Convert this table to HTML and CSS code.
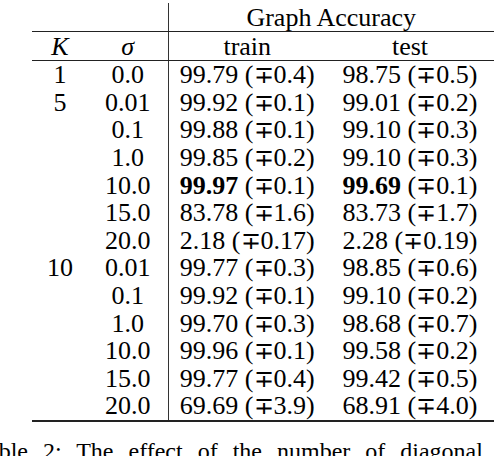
FILE: index.html
```html
<!DOCTYPE html>
<html lang="en">

<head>
    <meta charset="UTF-8">
    <title>Graph Accuracy</title>
    <link rel="stylesheet" href="styles.css">
</head>

<body>
    <table class="resultados">
        <colgroup>
            <col class="colK">
            <col class="colSigma">
            <col class="colTrain">
            <col class="colTest">
        </colgroup>
        <tr class="topo">
            <td></td>
            <td></td>
            <td class="divisa" colspan="2">Graph Accuracy</td>
        </tr>
        <tr class="cabecalho">
            <td><i>K</i></td>
            <td><i>σ</i></td>
            <td class="divisa">train</td>
            <td>test</td>
        </tr>
        <tr>
            <td>1</td><td>0.0</td>
            <td class="divisa">99.79 (<span class="mp">∓</span>0.4)</td><td>98.75 (<span class="mp">∓</span>0.5)</td>
        </tr>
        <tr>
            <td>5</td><td>0.01</td>
            <td class="divisa">99.92 (<span class="mp">∓</span>0.1)</td><td>99.01 (<span class="mp">∓</span>0.2)</td>
        </tr>
        <tr>
            <td></td><td>0.1</td>
            <td class="divisa">99.88 (<span class="mp">∓</span>0.1)</td><td>99.10 (<span class="mp">∓</span>0.3)</td>
        </tr>
        <tr>
            <td></td><td>1.0</td>
            <td class="divisa">99.85 (<span class="mp">∓</span>0.2)</td><td>99.10 (<span class="mp">∓</span>0.3)</td>
        </tr>
        <tr>
            <td></td><td>10.0</td>
            <td class="divisa"><b>99.97</b> (<span class="mp">∓</span>0.1)</td><td><b>99.69</b> (<span class="mp">∓</span>0.1)</td>
        </tr>
        <tr>
            <td></td><td>15.0</td>
            <td class="divisa">83.78 (<span class="mp">∓</span>1.6)</td><td>83.73 (<span class="mp">∓</span>1.7)</td>
        </tr>
        <tr>
            <td></td><td>20.0</td>
            <td class="divisa">2.18 (<span class="mp">∓</span>0.17)</td><td>2.28 (<span class="mp">∓</span>0.19)</td>
        </tr>
        <tr>
            <td>10</td><td>0.01</td>
            <td class="divisa">99.77 (<span class="mp">∓</span>0.3)</td><td>98.85 (<span class="mp">∓</span>0.6)</td>
        </tr>
        <tr>
            <td></td><td>0.1</td>
            <td class="divisa">99.92 (<span class="mp">∓</span>0.1)</td><td>99.10 (<span class="mp">∓</span>0.2)</td>
        </tr>
        <tr>
            <td></td><td>1.0</td>
            <td class="divisa">99.70 (<span class="mp">∓</span>0.3)</td><td>98.68 (<span class="mp">∓</span>0.7)</td>
        </tr>
        <tr>
            <td></td><td>10.0</td>
            <td class="divisa">99.96 (<span class="mp">∓</span>0.1)</td><td>99.58 (<span class="mp">∓</span>0.2)</td>
        </tr>
        <tr>
            <td></td><td>15.0</td>
            <td class="divisa">99.77 (<span class="mp">∓</span>0.4)</td><td>99.42 (<span class="mp">∓</span>0.5)</td>
        </tr>
        <tr class="ultima">
            <td></td><td>20.0</td>
            <td class="divisa">69.69 (<span class="mp">∓</span>3.9)</td><td>68.91 (<span class="mp">∓</span>4.0)</td>
        </tr>
    </table>

    <p class="legenda">Table 2: The effect of the number of diagonal blocks</p>
</body>

</html>
```

FILE: styles.css
```css
body {
    margin: 0;
    overflow: hidden;
    font-family: "Liberation Serif", "DejaVu Serif", serif;
    color: #000;
}

.resultados {
    border-collapse: collapse;
    margin-top: 3px;
    margin-left: 32px;
    width: 462px;
    font-size: 26px;
    table-layout: fixed;
}

.colK {
    width: 56px;
}

.colSigma {
    width: 80px;
}

.colTrain {
    width: 158px;
}

.colTest {
    width: 168px;
}

.resultados td {
    padding: 0;
    text-align: center;
    height: 27.6px;
    line-height: 27px;
    white-space: nowrap;
}

.mp {
    font-family: "DejaVu Sans", sans-serif;
    font-weight: 200;
    font-size: 0.92em;
    line-height: 0;
}

.divisa {
    border-left: 1px solid #333;
}

.topo td {
    height: 28px;
    border-bottom: 1px solid #222;
}

.cabecalho td {
    height: 28px;
    border-bottom: 1px solid #222;
}

.ultima td {
    border-bottom: 2px solid #222;
}

.legenda {
    margin: 15px 0 0 -25px;
    font-size: 24px;
    line-height: 28px;
    white-space: nowrap;
    word-spacing: 9px;
}
```
